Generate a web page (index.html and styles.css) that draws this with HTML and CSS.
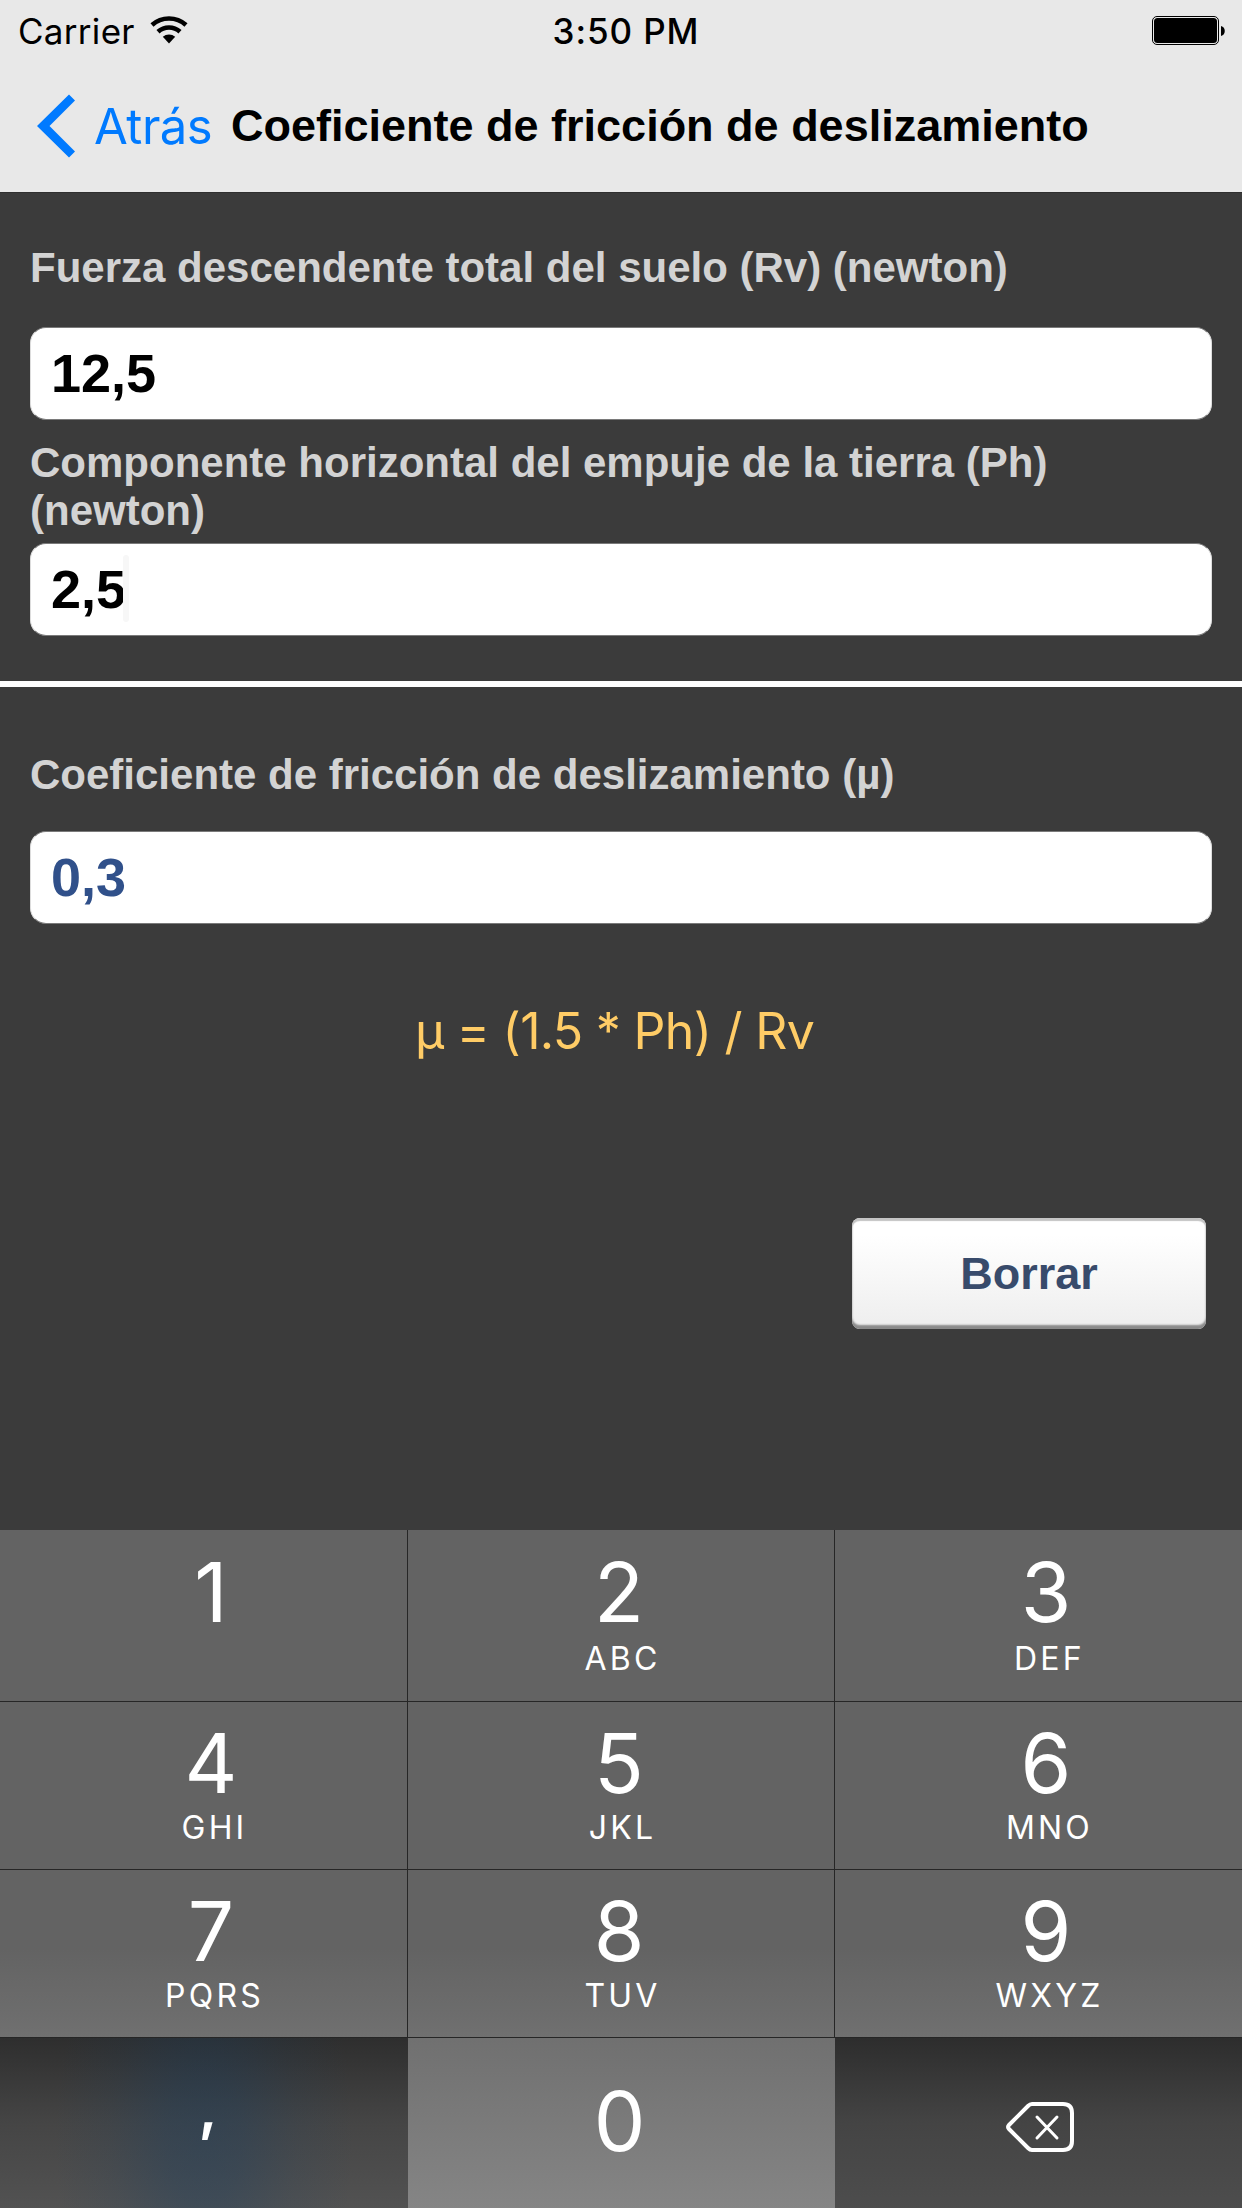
FILE: index.html
```html
<!DOCTYPE html>
<html lang="es">
<head>
    <meta charset="utf-8" />
    <meta name="viewport" content="width=device-width, initial-scale=1" />
    <title>Coeficiente de fricción de deslizamiento</title>
    <link rel="stylesheet" href="styles.css">
</head>
<body>
    <header class="header">
        <div class="status-bar">
            <div class="status-left">
                <span class="carrier">Carrier</span>
                <svg class="wifi" viewBox="0 0 38 28">
                    <path d="M2 9A25.5 25.5 0 0 1 36 9" fill="none" stroke="#000" stroke-width="4.6"/>
                    <path d="M8 15.7A16.5 16.5 0 0 1 30 15.7" fill="none" stroke="#000" stroke-width="4.6"/>
                    <path d="M19 27.5L12.800 20.700A9.500 9.500 0 0 1 25.200 20.700z"/>
                </svg>
            </div>
            <span class="time">3:50 PM</span>
            <div class="status-right">
                <svg class="battery" viewBox="0 0 74 30">
                    <rect x="0.5" y="0.5" width="66" height="28" rx="4.5" fill="none" stroke="#000"/>
                    <rect x="2" y="2" width="63" height="25" rx="3.5"/>
                    <path d="M69 10c5 1 5 9 0 10z"/>
                </svg>
            </div>
        </div>
        <nav class="nav-bar">
            <a class="back" href="#">
                <svg class="chevron" viewBox="0 0 38 64">
                    <path d="M0 32L32 0.5L38 6.5L12.5 32L38 57.5L32 63.5z" fill="#007aff"/>
                </svg>
                <span class="back-text">Atrás</span>
            </a>
            <h1 class="title">Coeficiente de fricción de deslizamiento</h1>
        </nav>
    </header>

    <main class="content">
        <section class="inputs">
            <div class="label label-first">Fuerza descendente total del suelo (Rv) (newton)</div>
            <div class="field">12,5</div>
            <div class="label label-second">Componente horizontal del empuje de la tierra (Ph) (newton)</div>
            <div class="field">2,5<i class="caret"></i></div>
        </section>
        <section class="result">
            <div class="label label-result">Coeficiente de fricción de deslizamiento (µ)</div>
            <div class="field field-result">0,3</div>
            <p class="formula">µ = (1.5 * Ph) / Rv</p>
            <button class="clear-button" type="button">Borrar</button>
        </section>
    </main>

    <div class="keypad">
        <div class="key key-top"><span class="digit">1</span></div>
        <div class="key key-top"><span class="digit">2</span><span class="letters">ABC</span></div>
        <div class="key key-top"><span class="digit">3</span><span class="letters">DEF</span></div>
        <div class="key"><span class="digit">4</span><span class="letters">GHI</span></div>
        <div class="key"><span class="digit">5</span><span class="letters">JKL</span></div>
        <div class="key"><span class="digit">6</span><span class="letters">MNO</span></div>
        <div class="key"><span class="digit">7</span><span class="letters">PQRS</span></div>
        <div class="key"><span class="digit">8</span><span class="letters">TUV</span></div>
        <div class="key"><span class="digit">9</span><span class="letters">WXYZ</span></div>
        <div class="key key-comma"><span class="comma">,</span></div>
        <div class="key key-zero"><span class="digit">0</span></div>
        <div class="key key-delete">
            <svg class="delete-icon" viewBox="0 0 70 52">
                <path d="M26 3H57q9 0 9 9V40q0 9-9 9H26q-2 0-4-2L3 28q-2-2 0-4L22 5q2-2 4-2z" fill="none" stroke="#fff" stroke-width="4"/>
                <path d="M31 16L51 37M51 16L31 37" stroke="#fff" stroke-width="3" stroke-linecap="round"/>
            </svg>
        </div>
    </div>
</body>
</html>
```
FILE: styles.css
```css
* {
    margin: 0;
    padding: 0;
    box-sizing: border-box;
}

body {
    width: 1242px;
    height: 2208px;
    overflow: hidden;
    display: flex;
    flex-direction: column;
    background: #3b3b3b;
    font-family: 'Liberation Sans', Arial, Helvetica, sans-serif;
}

/* Status bar and navigation */
.header {
    height: 193px;
    background: #e8e8e8;
    border-bottom: 1px solid #2f2f2f;
}

.status-bar {
    display: grid;
    grid-template-columns: 1fr auto 1fr;
    height: 60px;
    padding: 0 16px 0 18px;
    font-family: Inter, sans-serif;
    font-size: 35px;
    line-height: 63px;
    color: #000;
}

.status-left {
    display: flex;
    gap: 15px;
}

.carrier {
    letter-spacing: 0.3px;
}

.wifi {
    width: 38px;
    height: 28px;
    margin-top: 16px;
}

.time {
    padding-left: 8px;
    font-weight: 500;
    letter-spacing: 0.9px;
}

.status-right {
    display: flex;
    justify-content: flex-end;
}

.battery {
    width: 74px;
    height: 30px;
    margin-top: 16px;
}

.nav-bar {
    display: flex;
    height: 132px;
    padding-left: 37px;
}

.back {
    display: flex;
    width: 194px;
    gap: 19px;
    font-family: Inter, sans-serif;
    color: #007aff;
    text-decoration: none;
}

.chevron {
    width: 38px;
    height: 64px;
    margin-top: 34px;
}

.back-text {
    font-size: 49px;
    line-height: 133px;
    letter-spacing: -0.5px;
}

.title {
    font-size: 45px;
    font-weight: 700;
    line-height: 132px;
    color: #000;
    white-space: nowrap;
}

/* Form */
.content {
    height: 1337px;
}

.inputs {
    height: 494px;
    padding: 51px 30px 0;
    border-bottom: 6px solid #fff;
}

.result {
    padding: 64px 30px 0;
}

.label {
    font-size: 42px;
    font-weight: 700;
    line-height: 48px;
    color: #d3d3d3;
}

.label-first {
    margin-bottom: 35px;
}

.label-second {
    margin: 19px 0 8px;
    padding-right: 100px;
}

.label-result {
    margin-bottom: 32px;
}

.field {
    display: flex;
    height: 93px;
    padding-left: 20px;
    background: #fff;
    border: 1px solid #7a7a7a;
    border-left-color: #ddd;
    border-right-color: #ddd;
    border-radius: 16px;
    font-size: 54px;
    font-weight: 700;
    line-height: 90px;
    color: #000;
}

.field-result {
    color: #30508a;
}

.caret {
    width: 6px;
    height: 67px;
    margin: 11px 0 0 -3px;
    border-radius: 3px;
    background: #f7f7f7;
}

.formula {
    margin-top: 77px;
    padding-right: 13px;
    font-family: Inter, sans-serif;
    font-size: 50px;
    line-height: 60px;
    letter-spacing: -0.7px;
    text-align: center;
    color: #ffcc66;
}

.clear-button {
    display: block;
    width: 354px;
    height: 111px;
    margin: 157px 6px 0 auto;
    border: 0;
    border-radius: 8px;
    background: linear-gradient(#fff 15%, #efefef 92%);
    box-shadow: inset 0 3px 1px #c4c4c4, inset 0 -4px 2px #8a8a8a;
    font-family: inherit;
    font-size: 45px;
    font-weight: 700;
    color: #384b6b;
}

/* Numeric keypad */
.keypad {
    display: grid;
    grid-template-columns: 408px 427px 407px;
    grid-template-rows: 172px 168px 168px 170px;
    height: 678px;
    background: linear-gradient(#636363 420px, #707070 508px, #858585 678px);
    font-family: Inter, sans-serif;
    color: #fff;
}

.key {
    display: flex;
    flex-direction: column;
    align-items: center;
    padding: 19px 4px 0 0;
    border-right: 1px solid #262626;
    border-bottom: 1px solid #262626;
}

.key:nth-child(3n) {
    padding-left: 19px;
    border-right: 0;
}

.key:nth-child(3n + 1) {
    padding-left: 19px;
}

.key-top {
    padding-top: 20px;
}

.digit {
    font-size: 82px;
    line-height: 86px;
}

.letters {
    margin: 7px 0 0 7px;
    font-size: 32px;
    line-height: 28px;
    letter-spacing: 3.2px;
}

.key-top .letters {
    margin-top: 9px;
}

.key-comma,
.key-zero,
.key-delete {
    border: 0;
}

.key-zero {
    padding-top: 41px;
}

.key-comma {
    padding-top: 19px;
    background:
        radial-gradient(ellipse 150px 260px at 204px 100px, rgba(24, 62, 98, 0.38), rgba(24, 62, 98, 0.32) 25%, rgba(24, 62, 98, 0.12) 62%, rgba(24, 62, 98, 0)),
        linear-gradient(#2e2e2e, #454545 50%, #525252);
}

.key-delete {
    background: linear-gradient(#2d2d2d, #444 50%, #4d4d4d);
}

.comma {
    margin-right: 7px;
    font-size: 60px;
    font-weight: 600;
    line-height: 100px;
}

.delete-icon {
    width: 70px;
    height: 52px;
    margin: 44px 11px 0 0;
}
```
